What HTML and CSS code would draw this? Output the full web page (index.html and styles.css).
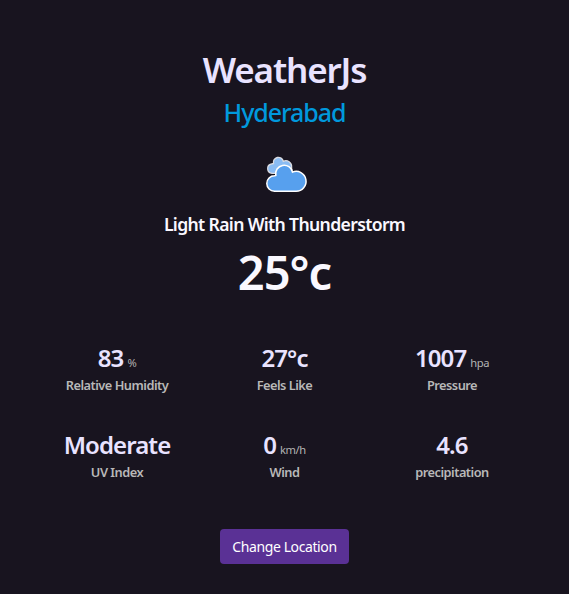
FILE: index.html
```html
<!DOCTYPE html>
<html lang="en">
<head>
<meta charset="utf-8">
<title>WeatherJs</title>
<link rel="stylesheet" href="styles.css">
</head>
<body>
<main class="app">
  <h1 class="title">WeatherJs</h1>
  <h2 class="city">Hyderabad</h2>
  <div class="icon">
    <svg width="64" height="56" viewBox="0 0 64 56">
      <path class="cloud-back" d="M17 28.300A4.700 4.700 0 0 1 16.500 19A5 5 0 0 1 18.500 18.500A5 5 0 1 1 28.300 16.300A5.800 5.800 0 0 1 36.600 22V28.300Z"/>
      <path class="cloud-front" d="M19.500 46.200A7.700 7.700 0 0 1 19.500 30.800L20.800 30.400A8.450 8.450 0 1 1 37.500 27.100A9.900 9.900 0 1 1 41 46.200Z"/>
    </svg>
  </div>
  <p class="desc">Light Rain With Thunderstorm</p>
  <p class="temp">25°c</p>
  <section class="stats">
    <div class="stat"><div class="value"><span>83</span><small class="unit">%</small></div><div class="label">Relative Humidity</div></div>
    <div class="stat"><div class="value"><span>27°c</span></div><div class="label">Feels Like</div></div>
    <div class="stat"><div class="value"><span>1007</span><small class="unit">hpa</small></div><div class="label">Pressure</div></div>
    <div class="stat"><div class="value"><span>Moderate</span></div><div class="label">UV Index</div></div>
    <div class="stat"><div class="value"><span>0</span><small class="unit">km/h</small></div><div class="label">Wind</div></div>
    <div class="stat"><div class="value"><span>4.6</span></div><div class="label">precipitation</div></div>
  </section>
  <button class="change">Change Location</button>
</main>
</body>
</html>
```
FILE: styles.css
```css
* { box-sizing: border-box; margin: 0; padding: 0; }
body {
  background: #18141f;
  color: #e9e3ff;
  font-family: "Noto Sans", sans-serif;
}
.app {
  display: flex;
  flex-direction: column;
  align-items: center;
  min-height: 594px;
  padding-top: 48px;
  text-align: center;
}
.title { font-size: 35px; line-height: 44px; font-weight: 600; letter-spacing: -1.15px; }
.city { font-size: 25px; line-height: 40px; font-weight: 500; letter-spacing: -1.05px; color: #0099dd; }
.icon { display: flex; align-items: center; height: 76px; padding: 6px 0 0 5px; }
.cloud-back { fill: #8abcf3; stroke: #d9dbe2; stroke-width: 1.3; }
.cloud-front { fill: #57a0ee; stroke: #fff; stroke-width: 1.5; }
.desc { font-size: 17.6px; line-height: 32px; font-weight: 600; letter-spacing: -0.65px; color: #faf8ff; }
.temp { font-size: 47px; line-height: 64px; font-weight: 600; letter-spacing: -1px; color: #faf8ff; }
.stats {
  display: grid;
  grid-template-columns: repeat(3, 167.5px);
  row-gap: 33px;
  margin-top: 38px;
}
.value {
  display: flex;
  justify-content: center;
  align-items: baseline;
  gap: 4px;
  height: 31px;
  font-size: 24px;
  line-height: 32px;
  font-weight: 600;
  letter-spacing: -0.9px;
  white-space: nowrap;
}
.unit { font-size: 11.2px; line-height: 1; font-weight: 400; letter-spacing: -0.4px; color: #b3b3b3; }
.label { font-size: 12.8px; line-height: 23px; font-weight: 600; letter-spacing: -0.5px; color: #b8b8b8; padding-top: 1px; height: 23px; }
.change {
  width: 129px;
  height: 35px;
  margin-top: 46px;
  border: 0;
  border-radius: 4px;
  background: #5a3195;
  color: #fff;
  font: 400 14px "Noto Sans", sans-serif;
  letter-spacing: -0.4px;
}
```
